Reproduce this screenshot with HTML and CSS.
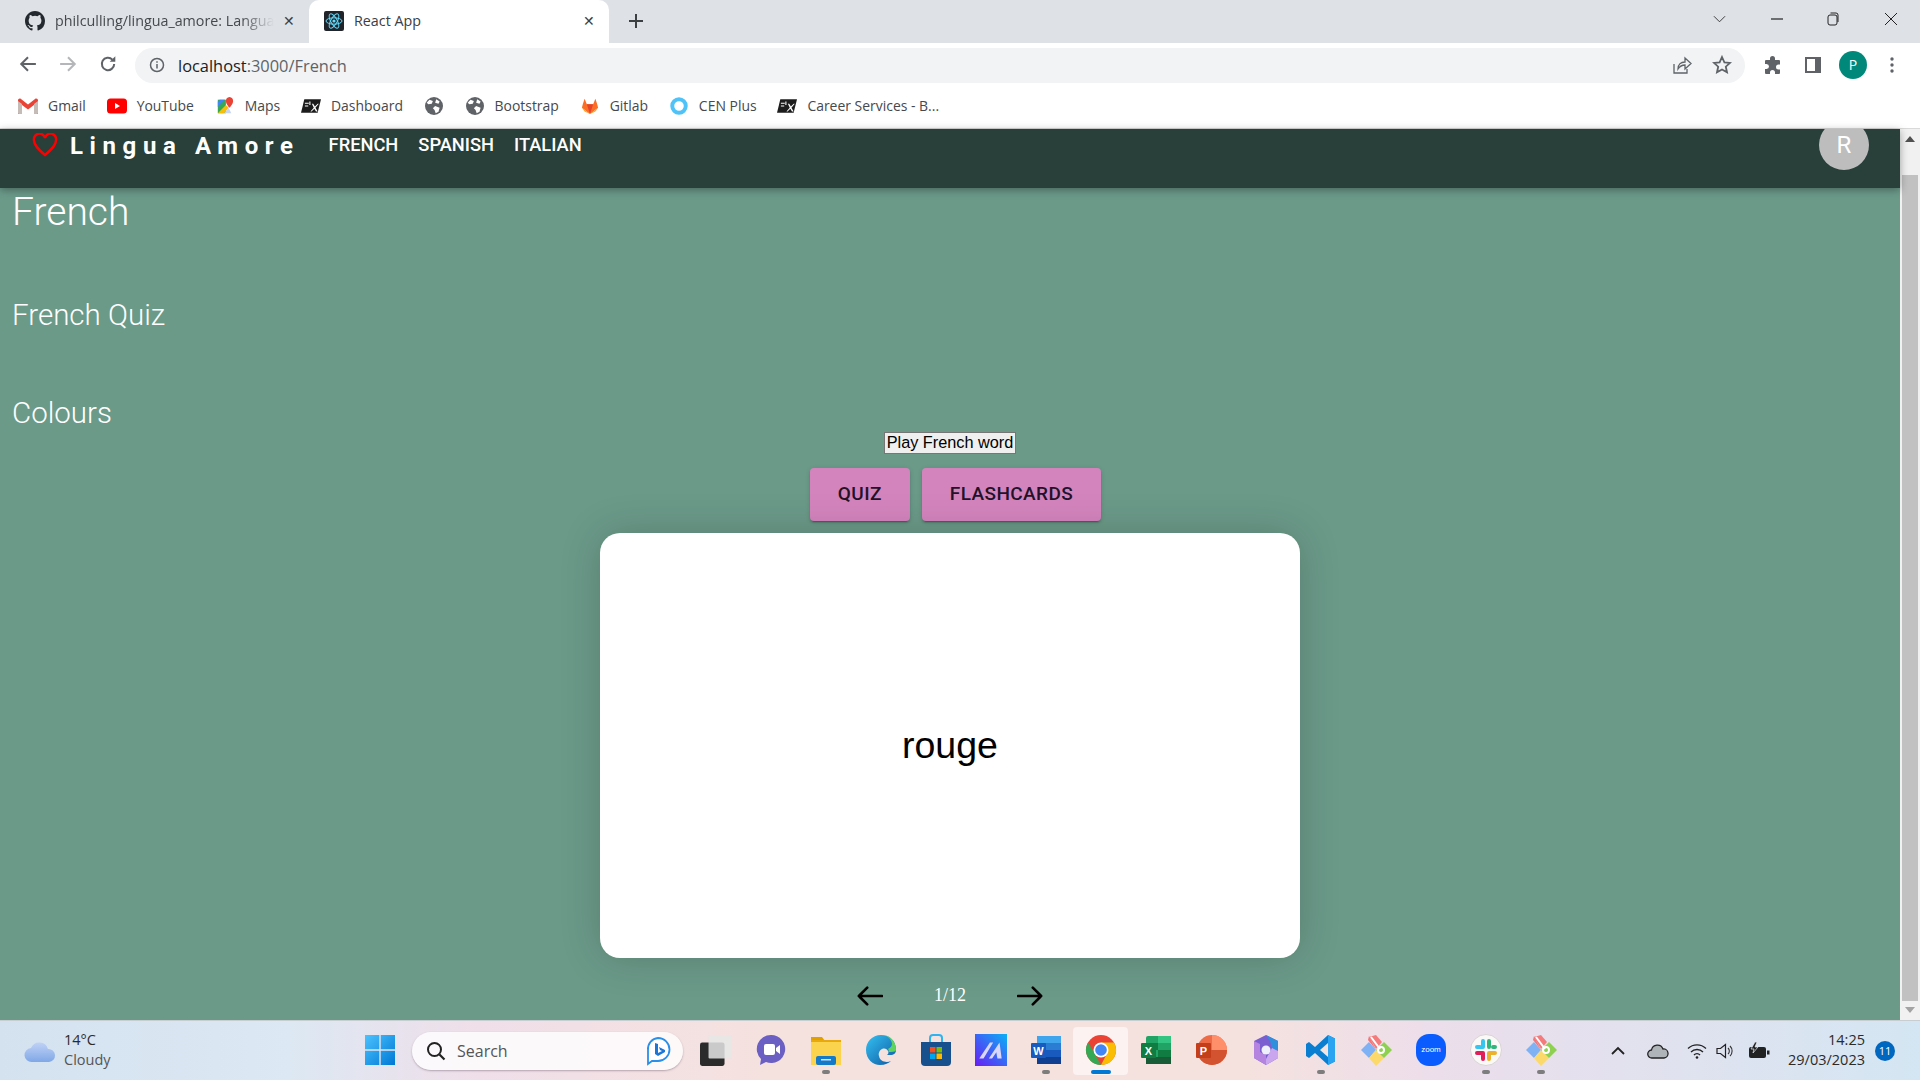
FILE: index.html
```html
<!DOCTYPE html>
<html lang="en">

<head>
  <meta charset="UTF-8">
  <meta name="viewport" content="width=device-width, initial-scale=1.0">
  <title>React App</title>
  <link rel="stylesheet" href="styles.css">
</head>

<body>
  <svg class="defs" width="0" height="0">
    <symbol id="globe" viewBox="0 0 16 16">
      <circle cx="8" cy="8" r="8" fill="#5f6368"/>
      <path d="M4 2.500l3 1-1 2.500-3 .5-1.500-1.500zM9 8l4 1.500-1 3.500-2.500 1.500-1-3-1.500-1.500zM10 2l3 2-1 2-3-1z" fill="#fff"/>
    </symbol>
    <symbol id="edx" viewBox="0 0 18 14">
      <path d="M3 1h15l-3 12H0z" fill="#1c1c1c"/>
      <path d="M11 5l1.500 2.500L15 5h1l-3 3.500 2 3.500h-1.500L12 9.500 9.500 12H8.500l3-3.500L9.800 5z" fill="#fff"/>
      <path d="M3.500 4.500h3.500M3.500 7h3M8 3v3" stroke="#fff" stroke-width="1" fill="none"/>
    </symbol>
    <symbol id="git-app" viewBox="0 0 32 32">
      <path d="M16 16L9 2l-1 4z" fill="#f2777a"/>
      <path d="M9 3l7-2 6 7-6 7z" fill="#f47b7b"/>
      <path d="M1 16l8-8 7 8-7 8z" fill="#7fb1f5"/>
      <path d="M9 24l7-8 8 8-8 8z" fill="#fbd96a"/>
      <path d="M16 16l8-8 8 8-8 8z" fill="#8ed04f"/>
      <circle cx="21" cy="16" r="3" fill="none" stroke="#fff" stroke-width="2"/>
      <path d="M11 3l9 12" stroke="#fff" stroke-width="2"/>
    </symbol>
  </svg>

  <div class="tab-strip">
    <div class="tab tab-idle">
      <svg class="tab-icon" viewBox="0 0 16 16">
        <path fill="#24292f" d="M8 0C3.580 0 0 3.580 0 8c0 3.540 2.290 6.530 5.470 7.590.4.070.55-.17.55-.38 0-.19-.01-.82-.01-1.490-2.010.37-2.530-.49-2.690-.94-.09-.23-.48-.94-.82-1.130-.28-.15-.68-.52-.01-.53.630-.01 1.080.58 1.230.82.720 1.210 1.870.870 2.330.66.070-.52.280-.87.510-1.070-1.780-.2-3.640-.89-3.640-3.950 0-.87.310-1.590.82-2.150-.08-.2-.36-1.020.08-2.120 0 0 .67-.21 2.200.82a7.420 7.420 0 0 1 4 0c1.530-1.040 2.200-.82 2.200-.82.440 1.100.16 1.920.08 2.120.510.560.820 1.270.820 2.150 0 3.070-1.870 3.750-3.650 3.950.29.250.54.730.54 1.480 0 1.070-.01 1.930-.01 2.200 0 .21.150.46.550.38A8.010 8.010 0 0 0 16 8c0-4.420-3.580-8-8-8z"/>
      </svg>
      <span class="tab-title tab-title-fade">philculling/lingua_amore: Langua</span>
      <span class="tab-close">&#10005;</span>
    </div>
    <div class="tab tab-active">
      <svg class="tab-icon" viewBox="0 0 20 20">
        <rect width="20" height="20" rx="2" fill="#20232a"/>
        <g fill="none" stroke="#61dafb" stroke-width="1">
          <ellipse cx="10" cy="10" rx="8" ry="3.200"/>
          <ellipse cx="10" cy="10" rx="8" ry="3.200" transform="rotate(60 10 10)"/>
          <ellipse cx="10" cy="10" rx="8" ry="3.200" transform="rotate(120 10 10)"/>
        </g>
        <circle cx="10" cy="10" r="1.600" fill="#61dafb"/>
      </svg>
      <span class="tab-title">React App</span>
      <span class="tab-close">&#10005;</span>
    </div>
    <svg class="new-tab" viewBox="0 0 16 16"><path d="M8 1v14M1 8h14" stroke="#3c4043" stroke-width="2"/></svg>
    <div class="window-controls">
      <svg viewBox="0 0 14 14" class="win-btn"><path d="M1 4l6 6 6-6" fill="none" stroke="#333" stroke-width="1"/></svg>
      <svg viewBox="0 0 14 14" class="win-btn"><path d="M1 7h12" stroke="#222" stroke-width="1.200"/></svg>
      <svg viewBox="0 0 14 14" class="win-btn"><rect x="2" y="3" width="9" height="10" rx="2" fill="none" stroke="#222"/><path d="M4.500 1h5.500a2 2 0 0 1 2 2v7" fill="none" stroke="#222"/></svg>
      <svg viewBox="0 0 14 14" class="win-btn"><path d="M1 1l12 12M13 1L1 13" stroke="#222" stroke-width="1"/></svg>
    </div>
  </div>

  <div class="toolbar">
    <svg class="tool-icon" viewBox="0 0 16 16"><path d="M15 8H2M8 2L2 8l6 6" fill="none" stroke="#5f6368" stroke-width="1.800"/></svg>
    <svg class="tool-icon" viewBox="0 0 16 16"><path d="M1 8h13M8 2l6 6-6 6" fill="none" stroke="#b4b6b9" stroke-width="1.800"/></svg>
    <svg class="tool-icon" viewBox="0 0 16 16"><path d="M13.500 8a5.500 5.500 0 1 1-1.600-3.900" fill="none" stroke="#5f6368" stroke-width="1.800"/><path d="M14.500 1v5h-5z" fill="#5f6368"/></svg>
    <div class="omnibox">
      <svg class="info-icon" viewBox="0 0 16 16"><circle cx="8" cy="8" r="6.500" fill="none" stroke="#5f6368" stroke-width="1.500"/><path d="M8 7v4.500M8 4.200v1.600" stroke="#5f6368" stroke-width="1.500"/></svg>
      <span class="url"><span class="url-host">localhost</span>:3000/French</span>
      <svg class="omni-icon share-icon" viewBox="0 0 20 20"><path d="M2 9v9h13v-4" fill="none" stroke="#5f6368" stroke-width="1.300"/><path d="M6 14c0-5 3-7 7-7V3l6 5.500-6 5.500v-4c-3 0-5 1-7 4z" fill="none" stroke="#5f6368" stroke-width="1.300"/></svg>
      <svg class="omni-icon" viewBox="0 0 20 20"><path d="M10 2l2.400 5.300 5.600.6-4.200 3.800 1.200 5.600L10 14.500l-5 2.800 1.200-5.600L2 7.900l5.600-.6z" fill="none" stroke="#5f6368" stroke-width="1.800"/></svg>
    </div>
    <div class="toolbar-right">
      <svg class="ext-icon" viewBox="0 0 20 20"><path fill="#5f6368" d="M7 3.500a2.500 2.500 0 0 1 5 0V5h4a1 1 0 0 1 1 1v3.500h-1.500a2.500 2.500 0 0 0 0 5H17V18a1 1 0 0 1-1 1h-4v-1.500a2.500 2.500 0 0 0-5 0V19H3a1 1 0 0 1-1-1v-4h1.500a2.500 2.500 0 0 0 0-5H2V6a1 1 0 0 1 1-1h4z"/></svg>
      <svg class="ext-icon" viewBox="0 0 20 20"><path fill="#5f6368" d="M2 2h16v16H2zm2 2v12h8V4z" fill-rule="evenodd"/></svg>
      <span class="profile">P</span>
      <svg class="menu-icon" viewBox="0 0 4 16"><circle cx="2" cy="2" r="1.700" fill="#5f6368"/><circle cx="2" cy="8" r="1.700" fill="#5f6368"/><circle cx="2" cy="14" r="1.700" fill="#5f6368"/></svg>
    </div>
  </div>

  <div class="bookmarks">
    <a class="bookmark">
      <svg class="bm-icon" viewBox="0 0 20 16"><path d="M0 2.500C0 1 1.500 0 3 1l7 5.500L17 1c1.500-1 3 0 3 1.500V16h-4V7l-6 4.500L4 7v9H0z" fill="#ea4335"/><path d="M4 16H1a1 1 0 0 1-1-1V3l4 3z" fill="#c5bcb8"/><path d="M16 16h3a1 1 0 0 0 1-1V3l-4 3z" fill="#c5bcb8"/></svg>
      Gmail
    </a>
    <a class="bookmark">
      <svg class="bm-icon" viewBox="0 0 20 16"><rect width="20" height="15" y=".5" rx="3.500" fill="#f00"/><path d="M8 5l5 3-5 3z" fill="#fff"/></svg>
      YouTube
    </a>
    <a class="bookmark">
      <svg class="bm-icon" viewBox="0 0 18 20"><path d="M1 3h9v15H1z" fill="#34a853"/><path d="M1 18l9-9 3 3-5 6z" fill="#fbbc04"/><path d="M3 3h6L1 11V5z" fill="#4285f4"/><path d="M14 0a4.500 4.500 0 0 1 4 4.500C18 8 14 12 14 12s-4-4-4-7.500A4.500 4.500 0 0 1 14 0z" fill="#ea4335"/><path d="M8 18l5-6 3 6z" fill="#c8d5f0"/></svg>
      Maps
    </a>
    <a class="bookmark">
      <svg class="bm-icon"><use href="#edx"/></svg>
      Dashboard
    </a>
    <a class="bookmark bookmark-icon-only">
      <svg class="bm-icon"><use href="#globe"/></svg>
    </a>
    <a class="bookmark">
      <svg class="bm-icon"><use href="#globe"/></svg>
      Bootstrap
    </a>
    <a class="bookmark">
      <svg class="bm-icon" viewBox="0 0 20 20"><path d="M10 19L1 12l1-4 2-6 2.500 6h7L16 2l2 6 1 4z" fill="#fc6d26"/><path d="M10 19L6.500 8h7z" fill="#e24329"/><path d="M1 12l9 7-6-3z" fill="#fca326"/><path d="M19 12l-9 7 6-3z" fill="#fca326"/></svg>
      Gitlab
    </a>
    <a class="bookmark">
      <svg class="bm-icon" viewBox="0 0 16 16"><circle cx="8" cy="8" r="6" fill="none" stroke="#4fc3f7" stroke-width="3.500"/></svg>
      CEN Plus
    </a>
    <a class="bookmark">
      <svg class="bm-icon"><use href="#edx"/></svg>
      Career Services - B...
    </a>
  </div>

  <div class="viewport">
    <div class="page">
      <header class="app-nav">
        <svg class="heart" viewBox="0 0 26 24"><path d="M13 22C6 16 2 12 2 7.500A5.500 5.500 0 0 1 13 5a5.500 5.500 0 0 1 11 2.500C24 12 20 16 13 22z" fill="none" stroke="#f00" stroke-width="2.400"/></svg>
        <span class="logo">Lingua Amore</span>
        <nav class="nav-links">
          <a>French</a>
          <a>Spanish</a>
          <a>Italian</a>
        </nav>
        <span class="avatar">R</span>
      </header>

      <main class="content">
        <h1 class="page-title">French</h1>
        <h2 class="section-title section-quiz">French Quiz</h2>
        <h2 class="section-title section-colours">Colours</h2>

        <div class="quiz-area">
          <button class="play-btn">Play French word</button>
          <div class="mode-btns">
            <button class="mode-btn">Quiz</button>
            <button class="mode-btn">Flashcards</button>
          </div>
          <div class="flashcard">rouge</div>
          <div class="pager">
            <svg class="arrow" viewBox="0 0 28 20"><path d="M27 10H2M11 1l-9 9 9 9" fill="none" stroke="#000" stroke-width="2.800" stroke-linecap="round" stroke-linejoin="round"/></svg>
            <span class="pager-count">1/12</span>
            <svg class="arrow" viewBox="0 0 28 20"><path d="M1 10h25M17 1l9 9-9 9" fill="none" stroke="#000" stroke-width="2.800" stroke-linecap="round" stroke-linejoin="round"/></svg>
          </div>
        </div>
      </main>
    </div>

    <div class="scrollbar">
      <span class="scroll-up"></span>
      <span class="scroll-thumb"></span>
      <span class="scroll-down"></span>
    </div>
  </div>

  <footer class="taskbar">
    <div class="weather">
      <svg class="weather-icon" viewBox="0 0 32 24">
        <defs><linearGradient id="cloud" x1="0" y1="0" x2="0" y2="1"><stop offset="0" stop-color="#c0d2f5"/><stop offset="1" stop-color="#7fa8e6"/></linearGradient></defs>
        <path d="M8 23a7 7 0 0 1-1-14 9 9 0 0 1 17 1 6.500 6.500 0 0 1 1 13z" fill="url(#cloud)"/>
      </svg>
      <div class="weather-text">
        <span>14°C</span>
        <span class="weather-desc">Cloudy</span>
      </div>
    </div>

    <div class="taskbar-apps">
      <div class="task-cell start-cell">
        <svg class="task-icon start-icon" viewBox="0 0 30 30">
          <defs><linearGradient id="win" x1="0" y1="0" x2="1" y2="1"><stop offset="0" stop-color="#4cc2ff"/><stop offset="1" stop-color="#0078d4"/></linearGradient></defs>
          <path d="M0 0h14.300v14.300H0zM15.700 0H30v14.300H15.700zM0 15.700h14.300V30H0zM15.700 15.700H30V30H15.700z" fill="url(#win)"/>
        </svg>
      </div>
      <div class="search-box">
        <svg class="search-icon" viewBox="0 0 20 20"><circle cx="8.500" cy="8.500" r="6.500" fill="none" stroke="#222" stroke-width="2"/><path d="M13.500 13.500l5 5" stroke="#222" stroke-width="2.200"/></svg>
        <span class="search-text">Search</span>
        <svg class="bing-icon" viewBox="0 0 26 30"><path d="M13 2a11.500 11.500 0 0 1 0 23H7l-4 3v-14A11 11 0 0 1 13 2z" fill="#fff" stroke="#2a8fe8" stroke-width="1.800"/><path d="M10 7l3 1v9l4-2-2-1-1-3 6 3v2l-7 4-3-2z" fill="#1b76d8"/></svg>
      </div>

      <div class="task-cell">
        <svg class="task-icon" viewBox="0 0 30 30"><rect x="0" y="8" width="23" height="22" rx="2" fill="#2b2b2b"/><rect x="8" y="1" width="22" height="22" rx="1" fill="#e6e6e6" opacity=".85"/></svg>
      </div>
      <div class="task-cell">
        <svg class="task-icon" viewBox="0 0 30 32"><path d="M15 1a14 14 0 1 1-5 27l-6 3 1-6A14 14 0 0 1 15 1z" fill="#6b5fc4"/><rect x="8" y="10" width="11" height="11" rx="2" fill="#fff"/><path d="M20 14l4-3v9l-4-3z" fill="#fff"/></svg>
      </div>
      <div class="task-cell task-open">
        <svg class="task-icon" viewBox="0 0 32 32"><path d="M1 3h11l3 4h-14z" fill="#e0a100"/><rect x="1" y="6" width="30" height="25" fill="#fcd34d"/><rect x="1" y="6" width="30" height="2" fill="#e8a910"/><rect x="6" y="22" width="20" height="9" rx="2" fill="#1479c9"/><rect x="11" y="25" width="10" height="1.500" fill="#cde4f7"/></svg>
      </div>
      <div class="task-cell">
        <svg class="task-icon" viewBox="0 0 32 32">
          <defs><linearGradient id="edge" x1="0" y1="0" x2="1" y2="1"><stop offset="0" stop-color="#35c1f1"/><stop offset="1" stop-color="#0c59a4"/></linearGradient></defs>
          <path d="M16 1C7 1 1 8 1 16c0 9 7 15 14 15 5 0 9-2 11-4-4 2-11 1-12-5-1-3 1-6 3-7 3-1 5 0 6 2 1 2 0 3-1 4h3c4 0 6-2 6-5C31 7 25 1 16 1z" fill="url(#edge)"/>
          <path d="M31 16c0-9-6-15-15-15 7 0 11 5 11 9 0 2-2 4-4 5 1 1 1 2 0 3h3c3 0 5-1 5-2z" fill="#5fd35f"/>
        </svg>
      </div>
      <div class="task-cell">
        <svg class="task-icon" viewBox="0 0 30 32"><path d="M9 8V4a3 3 0 0 1 3-3h6a3 3 0 0 1 3 3v4" fill="none" stroke="#2db4f0" stroke-width="2"/><path d="M0 8h30v20a4 4 0 0 1-4 4H4a4 4 0 0 1-4-4z" fill="#17508c"/><rect x="9" y="13" width="5.500" height="5.500" fill="#f25022"/><rect x="15.500" y="13" width="5.500" height="5.500" fill="#7fba00"/><rect x="9" y="19.500" width="5.500" height="5.500" fill="#00a4ef"/><rect x="15.500" y="19.500" width="5.500" height="5.500" fill="#ffb900"/></svg>
      </div>
      <div class="task-cell">
        <svg class="task-icon" viewBox="0 0 30 30">
          <defs><linearGradient id="mural" x1="0" y1="1" x2="1" y2="0"><stop offset="0" stop-color="#6a1bf5"/><stop offset="1" stop-color="#0bb0f5"/></linearGradient></defs>
          <rect width="30" height="30" fill="url(#mural)"/>
          <path d="M4 23L14 8h3L8 23zM13 23L23 8l2 15h-4l-1-6-4 6z" fill="#d9d6fb"/>
        </svg>
      </div>
      <div class="task-cell task-open">
        <svg class="task-icon" viewBox="0 0 32 32"><rect x="7" y="2" width="24" height="28" rx="2" fill="#2b7cd3"/><rect x="7" y="2" width="24" height="7" fill="#41a5ee"/><rect x="7" y="16" width="24" height="7" fill="#185abd"/><rect x="7" y="23" width="24" height="7" fill="#103f91"/><rect x="1" y="9" width="15" height="15" rx="1" fill="#185abd"/><text x="8.500" y="20.500" class="app-letter">W</text></svg>
      </div>
      <div class="task-cell task-active">
        <svg class="task-icon" viewBox="0 0 32 32"><circle cx="16" cy="16" r="15" fill="#ea4335"/><path d="M16 31A15 15 0 0 1 3 8.500L10 20z" fill="#34a853"/><path d="M16 31A15 15 0 0 0 29 8.500H16l6 11z" fill="#fbbc04"/><circle cx="16" cy="16" r="7.500" fill="#fff"/><circle cx="16" cy="16" r="5.800" fill="#4285f4"/></svg>
      </div>
      <div class="task-cell">
        <svg class="task-icon" viewBox="0 0 32 32"><rect x="6" y="2" width="25" height="28" rx="2" fill="#21a366"/><rect x="18" y="2" width="13" height="7" fill="#33c481"/><rect x="6" y="9" width="12" height="7" fill="#107c41"/><rect x="18" y="16" width="13" height="7" fill="#107c41"/><rect x="6" y="23" width="25" height="7" fill="#185c37"/><rect x="1" y="9" width="15" height="15" rx="1" fill="#107c41"/><text x="8.500" y="20.500" class="app-letter">X</text></svg>
      </div>
      <div class="task-cell">
        <svg class="task-icon" viewBox="0 0 32 32"><circle cx="17" cy="16" r="15" fill="#ed6c47"/><path d="M17 1a15 15 0 0 1 15 15H17z" fill="#ff8f6b"/><path d="M2 16h30a15 15 0 0 1-30 0z" fill="#d35230"/><rect x="1" y="9" width="15" height="15" rx="1" fill="#c43e1c"/><text x="8.500" y="20.500" class="app-letter">P</text></svg>
      </div>
      <div class="task-cell">
        <svg class="task-icon" viewBox="0 0 30 32"><path d="M15 1l12 6v17l-12 7-12-7V7z" fill="#7b5fd0"/><path d="M15 1l12 6v10l-6-3-2-7z" fill="#2f8fdc"/><path d="M3 7l6 3v8l6 3v10l-12-7z" fill="#b583e0"/><path d="M21 14l6 3v7l-12 7v-6z" fill="#c9a6ee"/><circle cx="15" cy="16" r="4.500" fill="#eef0fb"/></svg>
      </div>
      <div class="task-cell task-open">
        <svg class="task-icon" viewBox="0 0 30 32"><path d="M22 1l7 3.500v23L22 31 9 19l-6 5-3-2v-12l3-2 6 5z" fill="#0a7fd1"/><path d="M22 1l7 3.500v23L22 31z" fill="#2aa4f0"/><path d="M22 9l-8 7 8 7z" fill="#f4e4e1"/></svg>
      </div>
      <div class="task-cell">
        <svg class="task-icon"><use href="#git-app"/></svg>
      </div>
      <div class="task-cell">
        <svg class="task-icon" viewBox="0 0 30 32"><rect width="30" height="32" rx="13" fill="#0b5cff"/><text x="15" y="18" class="zoom-text">zoom</text></svg>
      </div>
      <div class="task-cell task-open">
        <svg class="task-icon" viewBox="0 0 32 32"><circle cx="16" cy="16" r="15.500" fill="#fbf8f8" stroke="#d8d4d4"/><g stroke-width="4" stroke-linecap="round"><path d="M13 7v6M7 13h3" stroke="#36c5f0"/><path d="M19 7v6M25 13h-2" stroke="#2eb67d"/><path d="M19 25v-6M25 19h-6" stroke="#ecb22e"/><path d="M13 25v-6M7 19h6" stroke="#e01e5a"/></g></svg>
      </div>
      <div class="task-cell task-open">
        <svg class="task-icon"><use href="#git-app"/></svg>
      </div>
    </div>

    <div class="tray">
      <svg class="tray-icon caret-icon" viewBox="0 0 16 10"><path d="M2 8l6-6 6 6" fill="none" stroke="#222" stroke-width="1.800"/></svg>
      <svg class="tray-icon cloud-icon" viewBox="0 0 22 16"><path d="M5 15a4 4 0 0 1-.5-8A6 6 0 0 1 16 6a4.500 4.500 0 0 1 1 9z" fill="#aeb4b8" stroke="#222" stroke-width="1.300"/></svg>
      <svg class="tray-icon wifi-icon" viewBox="0 0 20 16"><path d="M1 5.500a13 13 0 0 1 18 0M4 9a8.500 8.500 0 0 1 12 0M7 12a4 4 0 0 1 6 0" fill="none" stroke="#222" stroke-width="1.300"/><circle cx="10" cy="14.500" r="1.300" fill="#222"/></svg>
      <svg class="tray-icon speaker-icon" viewBox="0 0 20 16"><path d="M1 5.500h3.500L9.500 1.500v13L4.500 10.500H1z" fill="none" stroke="#222" stroke-width="1.200"/><path d="M12 5a4 4 0 0 1 0 6M14 3a7 7 0 0 1 0 10" fill="none" stroke="#333" stroke-width="1.100"/></svg>
      <svg class="tray-icon battery-icon" viewBox="0 0 22 18"><rect x="1" y="5" width="17" height="11" rx="2" fill="#222"/><rect x="19" y="8.500" width="2.500" height="4" fill="#222"/><path d="M7 0L3 7h3l-1 4 5-6H7l2-5z" fill="#222" stroke="#e8eef4" stroke-width=".7"/></svg>
      <div class="clock">
        <span>14:25</span>
        <span>29/03/2023</span>
      </div>
      <span class="notify">11</span>
    </div>
  </footer>
</body>

</html>
```

FILE: styles.css
```css
* {
  box-sizing: border-box;
}

html, body {
  height: 100%;
}

body {
  margin: 0;
  display: flex;
  flex-direction: column;
  overflow: hidden;
  font-family: "Open Sans", "Liberation Sans", sans-serif;
  background: #fff;
}

.defs {
  display: none;
}

/* browser chrome */
.tab-strip {
  height: 43px;
  flex: none;
  display: flex;
  align-items: flex-end;
  background: #dee1e6;
}

.tab {
  width: 309px;
  height: 43px;
  display: flex;
  align-items: center;
  padding: 0 13px 2px 25px;
  font-size: 14.300px;
  color: #45494d;
}

.tab-active {
  width: 300px;
  background: #fff;
  border-radius: 10px 10px 0 0;
  color: #3c4043;
  padding-left: 15px;
}

.tab-icon {
  width: 20px;
  height: 20px;
  flex: none;
}

.tab-title {
  flex: 1;
  margin-left: 10px;
  white-space: nowrap;
  overflow: hidden;
}

.tab-title-fade {
  -webkit-mask-image: linear-gradient(90deg, #000 85%, transparent);
  mask-image: linear-gradient(90deg, #000 85%, transparent);
}

.tab-close {
  width: 14px;
  margin-left: 8px;
  font-size: 14px;
  text-align: center;
  color: #3c4043;
}

.new-tab {
  width: 16px;
  height: 16px;
  margin: 0 0 14px 19px;
}

.window-controls {
  margin-left: auto;
  display: flex;
  align-self: flex-start;
}

.win-btn {
  width: 14px;
  height: 14px;
  margin: 12px 22px;
}

.window-controls .win-btn:first-child {
  width: 13px;
}

.window-controls .win-btn:nth-child(2) {
  margin-right: 20px;
}

.toolbar {
  height: 42px;
  flex: none;
  display: flex;
  align-items: center;
  padding: 0 0 0 19px;
  background: #fff;
}

.tool-icon {
  width: 18px;
  height: 18px;
  margin-right: 22px;
}

.omnibox {
  width: 1610px;
  height: 35px;
  margin: 2px 0 0 -4px;
  display: flex;
  align-items: center;
  padding: 0 13px 0 14px;
  border-radius: 18px;
  background: #f1f3f4;
}

.info-icon {
  width: 16px;
  height: 16px;
  margin-right: 13px;
}

.url {
  flex: 1;
  font-size: 16.400px;
  color: #5f6368;
}

.url-host {
  color: #202124;
}

.omni-icon {
  width: 20px;
  height: 20px;
  margin-left: 20px;
}

.toolbar-right {
  display: flex;
  align-items: center;
  margin-top: 2px;
}

.ext-icon {
  width: 20px;
  height: 20px;
  margin-left: 18px;
}

.ext-icon + .ext-icon {
  margin-left: 20px;
}

.profile {
  width: 28px;
  height: 28px;
  margin-left: 16px;
  border-radius: 50%;
  background: #00897b;
  color: #fff;
  font-size: 14px;
  line-height: 28px;
  text-align: center;
}

.menu-icon {
  width: 4px;
  height: 16px;
  margin-left: 23px;
}

.bookmarks {
  height: 44px;
  flex: none;
  display: flex;
  align-items: center;
  padding: 0 0 2px 18px;
  border-bottom: 1px solid #d9d9d9;
  background: #fff;
  font-size: 13.950px;
  color: #45494d;
}

.bookmark {
  display: flex;
  align-items: center;
  margin-right: 20.800px;
  white-space: nowrap;
}

.bm-icon {
  width: 20px;
  height: 18px;
  margin-right: 10px;
}

.bookmark-icon-only .bm-icon {
  margin-right: 0;
}

/* page */
.viewport {
  flex: 1;
  min-height: 0;
  display: flex;
}

.page {
  flex: 1;
  min-width: 0;
  display: flex;
  flex-direction: column;
  background: #6b9a89;
  color: #fff;
}

.app-nav {
  height: 59px;
  flex: none;
  position: relative;
  z-index: 1;
  display: flex;
  align-items: flex-start;
  overflow: hidden;
  padding: 4px 31px 0 32px;
  background: #283f3a;
  box-shadow: 0 2px 8px rgba(0, 0, 0, .35);
  font-family: Roboto, sans-serif;
}

.heart {
  width: 26px;
  height: 24px;
  flex: none;
}

.logo {
  margin-left: 12px;
  font-size: 24px;
  font-weight: 700;
  line-height: 26px;
  letter-spacing: 6.600px;
  white-space: nowrap;
}

.nav-links {
  display: flex;
  gap: 20px;
  margin-left: 29px;
  font-size: 18.300px;
  font-weight: 500;
  line-height: 24px;
  text-transform: uppercase;
}

.avatar {
  width: 50px;
  height: 50px;
  flex: none;
  margin-left: auto;
  margin-top: -13px;
  border-radius: 50%;
  background: #bdbdbd;
  font-size: 24px;
  line-height: 50px;
  text-align: center;
}

.content {
  flex: 1;
  min-height: 0;
  display: flex;
  flex-direction: column;
  padding: 0 12px;
  font-family: Roboto, sans-serif;
  font-weight: 300;
}

.page-title {
  margin: 0;
  padding-top: 1px;
  font-size: 39px;
  font-weight: 300;
  line-height: 46px;
}

.section-title {
  margin: 0;
  font-size: 29.500px;
  font-weight: 300;
  line-height: 36px;
}

.section-quiz {
  margin-top: 62px;
}

.section-colours {
  margin-top: 62px;
}

.quiz-area {
  display: flex;
  flex-direction: column;
  align-items: center;
}

.play-btn {
  height: 22px;
  margin-top: 1px;
  padding: 0 2px 2px;
  border: 1px solid #767676;
  background: #efefef;
  color: #000;
  font-family: "Liberation Sans", Arial, sans-serif;
  font-size: 16.300px;
}

.mode-btns {
  display: flex;
  gap: 12px;
  margin-top: 14px;
  padding-left: 11px;
}

.mode-btn {
  height: 53px;
  padding: 0 28px 2px;
  border: 0;
  border-radius: 4px;
  background: #d484bd;
  box-shadow: 0 3px 1px -2px rgba(0, 0, 0, .2), 0 2px 2px rgba(0, 0, 0, .14), 0 1px 5px rgba(0, 0, 0, .12);
  color: #23122a;
  font-family: Roboto, sans-serif;
  font-size: 19px;
  font-weight: 500;
  letter-spacing: .4px;
  text-transform: uppercase;
}

.flashcard {
  width: 700px;
  height: 425px;
  margin-top: 12px;
  display: flex;
  align-items: center;
  justify-content: center;
  border-radius: 20px;
  background: #fff;
  box-shadow: 0 0 40px rgba(0, 0, 0, .18);
  color: #000;
  font-family: "Liberation Sans", Arial, sans-serif;
  font-size: 37.500px;
  font-weight: 400;
}

.pager {
  display: flex;
  align-items: center;
  gap: 51px;
  margin-top: 27px;
}

.arrow {
  width: 26px;
  height: 20px;
}

.pager-count {
  width: 32px;
  color: #fff;
  font-family: "Liberation Serif", serif;
  font-size: 18px;
  font-weight: 400;
}

.scrollbar {
  width: 20px;
  flex: none;
  display: flex;
  flex-direction: column;
  align-items: center;
  padding: 7px 2px;
  background: #f1f1f1;
}

.scroll-up {
  width: 0;
  height: 0;
  border: 5px solid transparent;
  border-top: 0;
  border-bottom: 6px solid #505050;
}

.scroll-thumb {
  flex: 1;
  width: 16px;
  margin: 33px 0 6px;
  background: #c1c1c1;
}

.scroll-down {
  width: 0;
  height: 0;
  border: 5px solid transparent;
  border-bottom: 0;
  border-top: 6px solid #a3a3a3;
}

/* windows taskbar */
.taskbar {
  height: 60px;
  flex: none;
  display: flex;
  align-items: center;
  border-top: 1px solid #c7cdd0;
  background: linear-gradient(90deg, #d4e2f0 0, #dce8f3 15%, #f0dfe9 25%, #f5e2df 40%, #f5e2df 65%, #ecdeeb 75%, #d4e6f3 100%);
  color: #2b2b2b;
}

.weather {
  width: 352px;
  flex: none;
  display: flex;
  align-items: center;
  padding-left: 24px;
}

.weather-icon {
  width: 32px;
  height: 24px;
}

.weather-text {
  display: flex;
  flex-direction: column;
  margin-left: 8px;
  padding-bottom: 2px;
  font-size: 14.500px;
  line-height: 20px;
}

.weather-desc {
  color: #555;
}

.taskbar-apps {
  display: flex;
  align-items: center;
}

.task-cell {
  position: relative;
  width: 55px;
  height: 48px;
  display: flex;
  align-items: center;
  justify-content: center;
  padding-bottom: 2px;
  border-radius: 4px;
}

.task-icon {
  width: 32px;
  height: 32px;
}

.start-icon {
  width: 30px;
  height: 30px;
}

.task-active {
  background: rgba(255, 255, 255, .55);
}

.task-open::after,
.task-active::after {
  content: "";
  position: absolute;
  left: 50%;
  bottom: 1px;
  width: 8px;
  height: 4px;
  margin-left: -4px;
  border-radius: 2px;
  background: #7d7d7d;
}

.task-active::after {
  width: 20px;
  margin-left: -10px;
  background: #0078d4;
}

.app-letter {
  fill: #fff;
  font-family: "Liberation Sans", sans-serif;
  font-size: 11px;
  font-weight: 700;
  text-anchor: middle;
}

.zoom-text {
  fill: #fff;
  font-family: "Liberation Sans", sans-serif;
  font-size: 8px;
  text-anchor: middle;
}

.search-box {
  width: 271px;
  height: 38px;
  margin: 0 5px;
  display: flex;
  align-items: center;
  padding: 0 12px 0 14px;
  border-radius: 19px;
  background: rgba(255, 255, 255, .8);
  box-shadow: 0 1px 2px rgba(90, 70, 90, .4);
}

.search-icon {
  width: 20px;
  height: 20px;
}

.search-text {
  flex: 1;
  margin-left: 11px;
  font-size: 16px;
  color: #555;
}

.bing-icon {
  width: 26px;
  height: 30px;
}

.tray {
  flex: 1;
  display: flex;
  align-items: center;
  padding-left: 42px;
}

.tray-icon {
  flex: none;
}

.caret-icon {
  width: 16px;
  height: 10px;
}

.cloud-icon {
  width: 22px;
  height: 16px;
  margin-left: 21px;
}

.wifi-icon {
  width: 20px;
  height: 16px;
  margin-left: 18px;
}

.speaker-icon {
  width: 20px;
  height: 16px;
  margin-left: 9px;
}

.battery-icon {
  width: 22px;
  height: 18px;
  margin-left: 12px;
}

.clock {
  display: flex;
  flex-direction: column;
  align-items: flex-end;
  margin-left: auto;
  padding-bottom: 2px;
  font-size: 14.500px;
  line-height: 20px;
}

.notify {
  width: 20px;
  height: 20px;
  margin: 0 25px 0 10px;
  border-radius: 50%;
  background: #0067c0;
  color: #fff;
  font-size: 11px;
  line-height: 20px;
  text-align: center;
}
```
